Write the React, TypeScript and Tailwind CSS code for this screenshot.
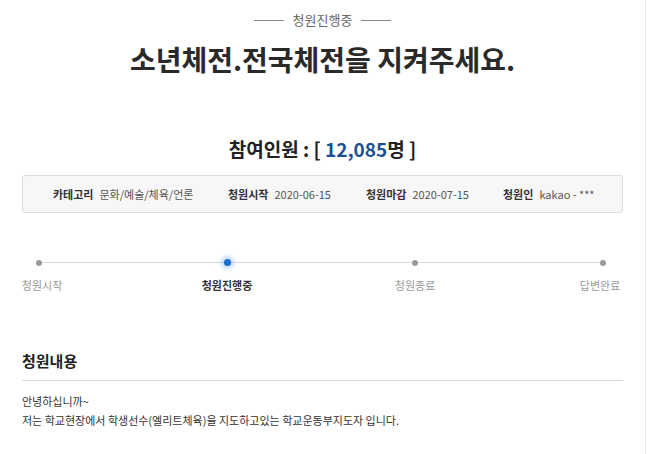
const FONT = "font-['Noto_Sans_CJK_KR','Noto_Sans',sans-serif]";

const steps = [
  { label: "청원시작", active: false, shift: "ml-[6px]" },
  { label: "청원진행중", active: true, shift: "" },
  { label: "청원종료", active: false, shift: "" },
  { label: "답변완료", active: false, shift: "mr-[6px]" },
];

function Meta({ label, value }: { label: string; value: string }) {
  return (
    <div className="flex items-center gap-[6px]">
      <span className="font-bold text-[#333]">{label}</span>
      <span className="text-[#555]">{value}</span>
    </div>
  );
}

export default function App() {
  return (
    <div className={`${FONT} w-[646px] min-h-[454px] bg-white border-r border-[#e6e6e6] text-[#333]`}>
      <div className="px-[22px] pt-[11px]">
        {/* status */}
        <div className="flex items-center justify-center gap-[9px] text-[13px] text-[#666] leading-[18px]">
          <span className="w-[30px] h-px bg-[#888]" />
          <span>청원진행중</span>
          <span className="w-[30px] h-px bg-[#888]" />
        </div>

        <h1 className="mt-[12px] text-center text-[28px] font-bold leading-[36px] text-[#2a2a2a]">
          소년체전.전국체전을 지켜주세요.
        </h1>

        <p className="mt-[59px] text-center text-[19px] font-bold leading-[26px] text-[#222]">
          참여인원 : [ <span className="text-[#1d4f91]">12,085</span>명 ]
        </p>

        {/* info box */}
        <div className="mt-[13px] h-[38px] flex items-center rounded-[3px] border border-[#dedede] bg-[#f7f7f7] text-[11px] pl-[30px]">
          <div className="w-[175px]">
            <Meta label="카테고리" value="문화/예술/체육/언론" />
          </div>
          <div className="w-[138px]">
            <Meta label="청원시작" value="2020-06-15" />
          </div>
          <div className="w-[137px]">
            <Meta label="청원마감" value="2020-07-15" />
          </div>
          <Meta label="청원인" value="kakao - ***" />
        </div>

        {/* progress */}
        <div className="mt-[46px] relative pr-[3px]">
          <div className="absolute left-[17px] right-[20px] top-[3px] h-px bg-[#d6d6d6]" />
          <div className="flex justify-between">
            {steps.map((s, i) => (
              <div key={i} className="w-[34px] flex flex-col items-center">
                <div className="h-[7px] flex items-center">
                  {s.active ? (
                    <span className="relative z-10 w-[7px] h-[7px] rounded-full bg-[#1a6fd0] shadow-[0_0_4px_3px_rgba(80,150,240,0.35)]" />
                  ) : (
                    <span className="relative z-10 w-[6px] h-[6px] rounded-full bg-[#9a9a9a]" />
                  )}
                </div>
                <span
                  className={`mt-[11px] whitespace-nowrap text-[11px] leading-[16px] ${s.shift} ${
                    s.active ? "font-bold text-[#333]" : "text-[#999]"
                  }`}
                >
                  {s.label}
                </span>
              </div>
            ))}
          </div>
        </div>

        {/* content */}
        <h2 className="mt-[57px] text-[15px] font-bold leading-[22px] text-[#222]">청원내용</h2>
        <div className="mt-[8px] h-px bg-[#dcdcdc]" />
        <div className="mt-[11px] text-[11px] leading-[19px] text-[#333]">
          <p>안녕하십니까~</p>
          <p>저는 학교현장에서 학생선수(엘리트체육)을 지도하고있는 학교운동부지도자 입니다.</p>
        </div>
      </div>
    </div>
  );
}
